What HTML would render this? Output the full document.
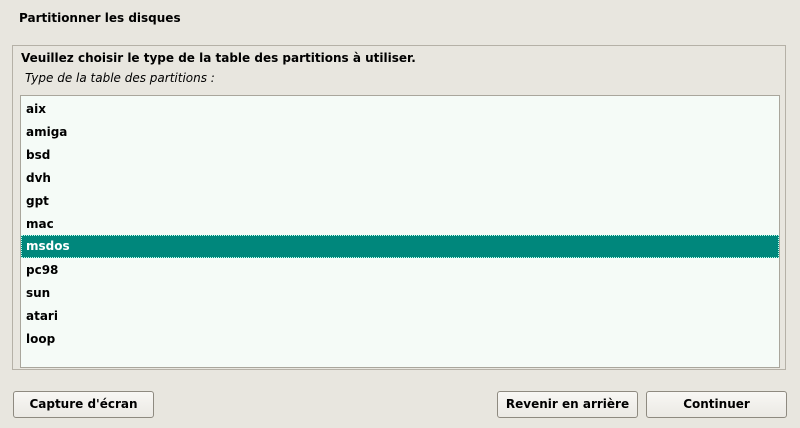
<!DOCTYPE html>
<html><head><meta charset="utf-8"><style>
html,body{margin:0;padding:0;}
body{width:800px;height:428px;background:#e8e6df;position:relative;overflow:hidden;font-family:"DejaVu Sans","Liberation Sans",sans-serif;font-size:12px;color:#000;}
.t{position:absolute;font-weight:bold;white-space:nowrap;}
#frame{position:absolute;left:12px;top:45px;width:774px;height:325px;border:1px solid #b5b1a7;box-sizing:border-box;}
#list{position:absolute;left:20px;top:95px;width:760px;height:273px;border:1px solid #a9a69c;background:#f5fbf7;box-sizing:border-box;}
.row{position:absolute;left:0;width:758px;height:22px;line-height:22px;padding-left:5px;box-sizing:border-box;font-weight:bold;}
.sel{background:#00877c;color:#fff;border:1px dotted #bfe;}
.btn{position:absolute;top:391px;height:27px;border:1px solid #8e8a80;border-radius:3px;background:linear-gradient(#f8f7f4,#ebe9e4);box-sizing:border-box;text-align:center;line-height:25px;font-weight:bold;}
</style></head><body>
<div class="t" style="left:19px;top:11px;">Partitionner les disques</div>
<div id="frame"></div>
<div class="t" style="left:21px;top:51px;">Veuillez choisir le type de la table des partitions à utiliser.</div>
<div style="position:absolute;left:25px;top:71px;font-style:italic;white-space:nowrap;">Type de la table des partitions :</div>
<div id="list">
<div class="row" style="top:2px">aix</div>
<div class="row" style="top:25px">amiga</div>
<div class="row" style="top:48px">bsd</div>
<div class="row" style="top:71px">dvh</div>
<div class="row" style="top:94px">gpt</div>
<div class="row" style="top:117px">mac</div>
<div class="row sel" style="top:139px;height:23px;line-height:21px;padding-left:4px;">msdos</div>
<div class="row" style="top:163px">pc98</div>
<div class="row" style="top:186px">sun</div>
<div class="row" style="top:209px">atari</div>
<div class="row" style="top:232px">loop</div>
</div>
<div class="btn" style="left:13px;width:141px;">Capture d'écran</div>
<div class="btn" style="left:497px;width:141px;">Revenir en arrière</div>
<div class="btn" style="left:646px;width:141px;">Continuer</div>
</body></html>
